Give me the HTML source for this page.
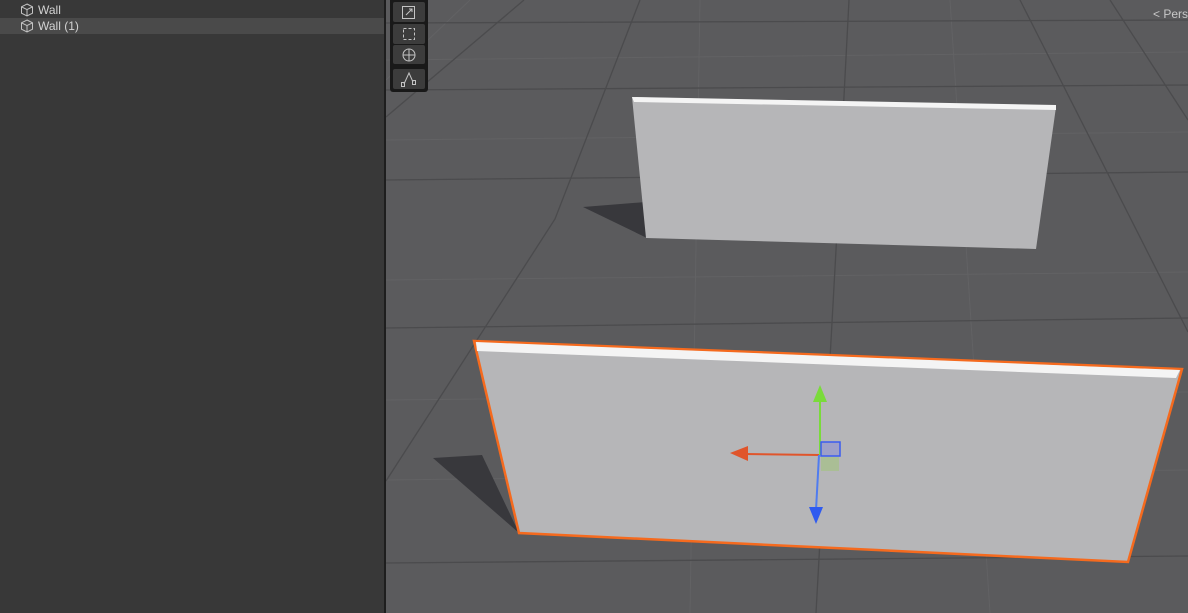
<!DOCTYPE html>
<html><head><style>
body{margin:0;width:1188px;height:613px;overflow:hidden;background:#383838;font-family:"Liberation Sans",sans-serif;position:relative}
.left{position:absolute;left:0;top:0;width:384px;height:613px;background:#383838}
.row{position:absolute;left:0;width:384px;height:16px;color:#d2d2d2;font-size:12px;line-height:16px}
.row span{position:absolute;left:38px}
.sep{position:absolute;left:384px;top:0;width:2px;height:613px;background:#1e1e1e}
</style></head><body>
<div class="left">
<div class="row" style="top:2px"><svg style="position:absolute;left:20px;top:1px" width="14" height="14" viewBox="0 0 14 14" fill="none" stroke="#c4c4c4" stroke-width="1"><path d="M7 1L12.5 3.8V10.2L7 13L1.5 10.2V3.8Z M1.5 3.8L7 6.6L12.5 3.8 M7 6.6V13"/></svg><span>Wall</span></div>
<div class="row" style="top:18px;background:#4a4a4a"><svg style="position:absolute;left:20px;top:1px" width="14" height="14" viewBox="0 0 14 14" fill="none" stroke="#c4c4c4" stroke-width="1"><path d="M7 1L12.5 3.8V10.2L7 13L1.5 10.2V3.8Z M1.5 3.8L7 6.6L12.5 3.8 M7 6.6V13"/></svg><span>Wall (1)</span></div>
</div>
<div class="sep"></div>
<svg style="position:absolute;left:386px;top:0" width="802" height="613" viewBox="386 0 802 613">
<rect x="386" y="0" width="802" height="613" fill="#5b5b5d"/>
<g stroke="#626264" stroke-width="1" fill="none">
<path d="M386 60 L1188 52"/><path d="M386 140 L1188 132"/><path d="M386 280 L1188 272"/><path d="M386 400 L1188 392"/><path d="M386 480 L1188 470"/>
<path d="M700 0 L690 613"/><path d="M950 0 L990 613"/><path d="M470 0 L386 80"/>
</g>
<g stroke="#4b4b4d" stroke-width="1.3" fill="none">
<path d="M386 23 L1188 20"/><path d="M386 90 L1188 85"/><path d="M386 180 L1188 172"/><path d="M386 328 L1188 318"/><path d="M386 563 L1188 556"/>
<path d="M849 0 L836 250 L816 613"/><path d="M524 0 L386 117"/><path d="M640 0 L555 219 L386 481"/><path d="M1020 0 L1188 332"/><path d="M1110 0 L1188 120"/>
</g>
<polygon points="583,207 646,202 647,238" fill="#38383c"/>
<polygon points="433,458 482,455 519,533" fill="#38383c"/>
<polygon points="632,97 1056,107 1036,249 646,238" fill="#b6b6b8"/>
<polygon points="632,97 1056,105 1056,110 634,102" fill="#f4f4f4"/>
<polygon points="474,341 1182,369 1128,562 519,533" fill="#b6b6b8" stroke="#f56a1e" stroke-width="2.5"/>
<polygon points="476,342 1180,370 1176,378 477,351" fill="#f4f4f4"/>
<line x1="820" y1="455" x2="745" y2="454" stroke="#e0552b" stroke-width="2"/>
<polygon points="730,453 748,446 748,461" fill="#e0552b"/>
<line x1="820" y1="455" x2="820" y2="400" stroke="#7adb3a" stroke-width="2"/>
<polygon points="820,385 813,402 827,402" fill="#7adb3a"/>
<line x1="819" y1="455" x2="816" y2="510" stroke="#4f7cf0" stroke-width="2"/>
<polygon points="816,524 809,507 823,507" fill="#2f5bf0"/>
<rect x="821" y="442" width="19" height="14" fill="#9ea0c8" stroke="#3a5cf0" stroke-width="1.5"/>
<rect x="821" y="457" width="18" height="14" fill="#a7c08c" opacity=".8"/>
<text x="1153" y="18" fill="#c8c8c8" font-size="12" font-family="Liberation Sans">&lt; Pers</text>
<rect x="390" y="-4" width="38" height="96" rx="3" fill="#191919"/>
<rect x="393" y="2" width="32" height="20" rx="2" fill="#3c3c3c"/>
<rect x="393" y="24" width="32" height="20" rx="2" fill="#3c3c3c"/>
<rect x="393" y="45" width="32" height="19" rx="2" fill="#3c3c3c"/>
<rect x="393" y="69" width="32" height="20" rx="2" fill="#3c3c3c"/>
<g stroke="#c4c4c4" fill="none" stroke-width="1">
<rect x="402.5" y="6.5" width="12" height="12"/><path d="M406 15L412 9M409 9H412V12"/>
<rect x="403.5" y="28.5" width="11" height="11" stroke-dasharray="3 2"/>
<circle cx="409" cy="55" r="6"/><path d="M409 49V61M403 55H415"/>
<path d="M404 84L409 73L413 82"/><rect x="401.5" y="82.5" width="3" height="4"/><rect x="412.5" y="80.5" width="3" height="4"/>
</g>
</svg>
</body></html>
